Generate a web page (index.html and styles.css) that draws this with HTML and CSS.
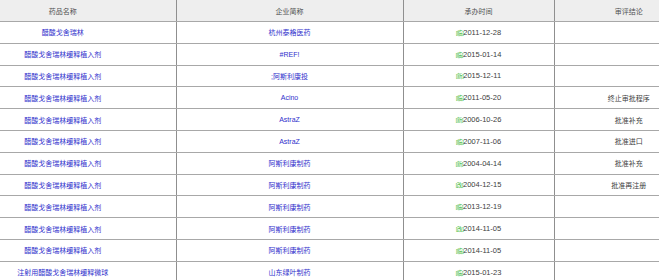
FILE: index.html
```html
<!DOCTYPE html>
<html lang="zh-CN">
<head>
<meta charset="utf-8">
<title>药品列表</title>
<link rel="stylesheet" href="styles.css">
</head>
<body>
<table class="grid">
  <colgroup>
    <col class="c1"><col class="c2"><col class="c3"><col class="c4">
  </colgroup>
  <thead>
    <tr><th class="name-h">药品名称</th><th>企业简称</th><th>承办时间</th><th class="res-h">审评结论</th></tr>
  </thead>
  <tbody>
    <tr><td class="name">醋酸戈舍瑞林</td><td class="co">杭州泰格医药</td><td class="date"><span class="tag">[临]</span>2011-12-28</td><td class="res"></td></tr>
    <tr><td class="name">醋酸戈舍瑞林缓释植入剂</td><td class="co">#REF!</td><td class="date"><span class="tag">[临]</span>2015-01-14</td><td class="res"></td></tr>
    <tr><td class="name">醋酸戈舍瑞林缓释植入剂</td><td class="co">;阿斯利康投</td><td class="date"><span class="tag">[新]</span>2015-12-11</td><td class="res"></td></tr>
    <tr><td class="name">醋酸戈舍瑞林缓释植入剂</td><td class="co">Acino</td><td class="date"><span class="tag">[临]</span>2011-05-20</td><td class="res">终止审批程序</td></tr>
    <tr><td class="name">醋酸戈舍瑞林缓释植入剂</td><td class="co">AstraZ</td><td class="date"><span class="tag">[新]</span>2006-10-26</td><td class="res">批准补充</td></tr>
    <tr><td class="name">醋酸戈舍瑞林缓释植入剂</td><td class="co">AstraZ</td><td class="date"><span class="tag">[临]</span>2007-11-06</td><td class="res">批准进口</td></tr>
    <tr><td class="name">醋酸戈舍瑞林缓释植入剂</td><td class="co">阿斯利康制药</td><td class="date"><span class="tag">[新]</span>2004-04-14</td><td class="res">批准补充</td></tr>
    <tr><td class="name">醋酸戈舍瑞林缓释植入剂</td><td class="co">阿斯利康制药</td><td class="date"><span class="tag">[改]</span>2004-12-15</td><td class="res">批准再注册</td></tr>
    <tr><td class="name">醋酸戈舍瑞林缓释植入剂</td><td class="co">阿斯利康制药</td><td class="date"><span class="tag">[临]</span>2013-12-19</td><td class="res"></td></tr>
    <tr><td class="name">醋酸戈舍瑞林缓释植入剂</td><td class="co">阿斯利康制药</td><td class="date"><span class="tag">[改]</span>2014-11-05</td><td class="res"></td></tr>
    <tr><td class="name">醋酸戈舍瑞林缓释植入剂</td><td class="co">阿斯利康制药</td><td class="date"><span class="tag">[临]</span>2014-11-05</td><td class="res"></td></tr>
    <tr><td class="name">注射用醋酸戈舍瑞林缓释微球</td><td class="co">山东绿叶制药</td><td class="date"><span class="tag">[临]</span>2015-01-23</td><td class="res"></td></tr>
  </tbody>
</table>
</body>
</html>
```
FILE: styles.css
```css
html, body {
  margin: 0;
  padding: 0;
  background: #ffffff;
  overflow: hidden;
}
.grid {
  border-collapse: collapse;
  table-layout: fixed;
  width: 659px;
  font-family: "Liberation Sans", "Noto Sans CJK SC", sans-serif;
  font-size: 7px;
}
.c1 { width: 176px; }
.c2 { width: 227px; }
.c3 { width: 151px; }
.c4 { width: 105px; }
.grid th {
  height: 21px;
  padding: 0;
  background: #eeeeee;
  color: #505050;
  font-weight: normal;
  text-align: center;
  border-right: 1px solid #8f8f8f;
  border-bottom: 1px solid #a8a8a8;
}
.grid td {
  height: 20.8px;
  padding: 0;
  text-align: center;
  border-right: 1px solid #8f8f8f;
  border-bottom: 1px solid #a8a8a8;
  white-space: nowrap;
  overflow: hidden;
}
.grid th:last-child,
.grid td:last-child {
  border-right: none;
}
.grid .name-h,
.grid .name {
  padding-right: 50px;
}
.grid .res-h,
.grid .res {
  padding-left: 44px;
}
.name, .co {
  color: #3030cc;
}
.date {
  color: #404040;
  font-size: 7.5px;
}
.res {
  color: #404040;
}
.tag {
  color: #2fb52f;
  font-size: 5.5px;
  letter-spacing: -0.4px;
  vertical-align: 0.3px;
}
```
